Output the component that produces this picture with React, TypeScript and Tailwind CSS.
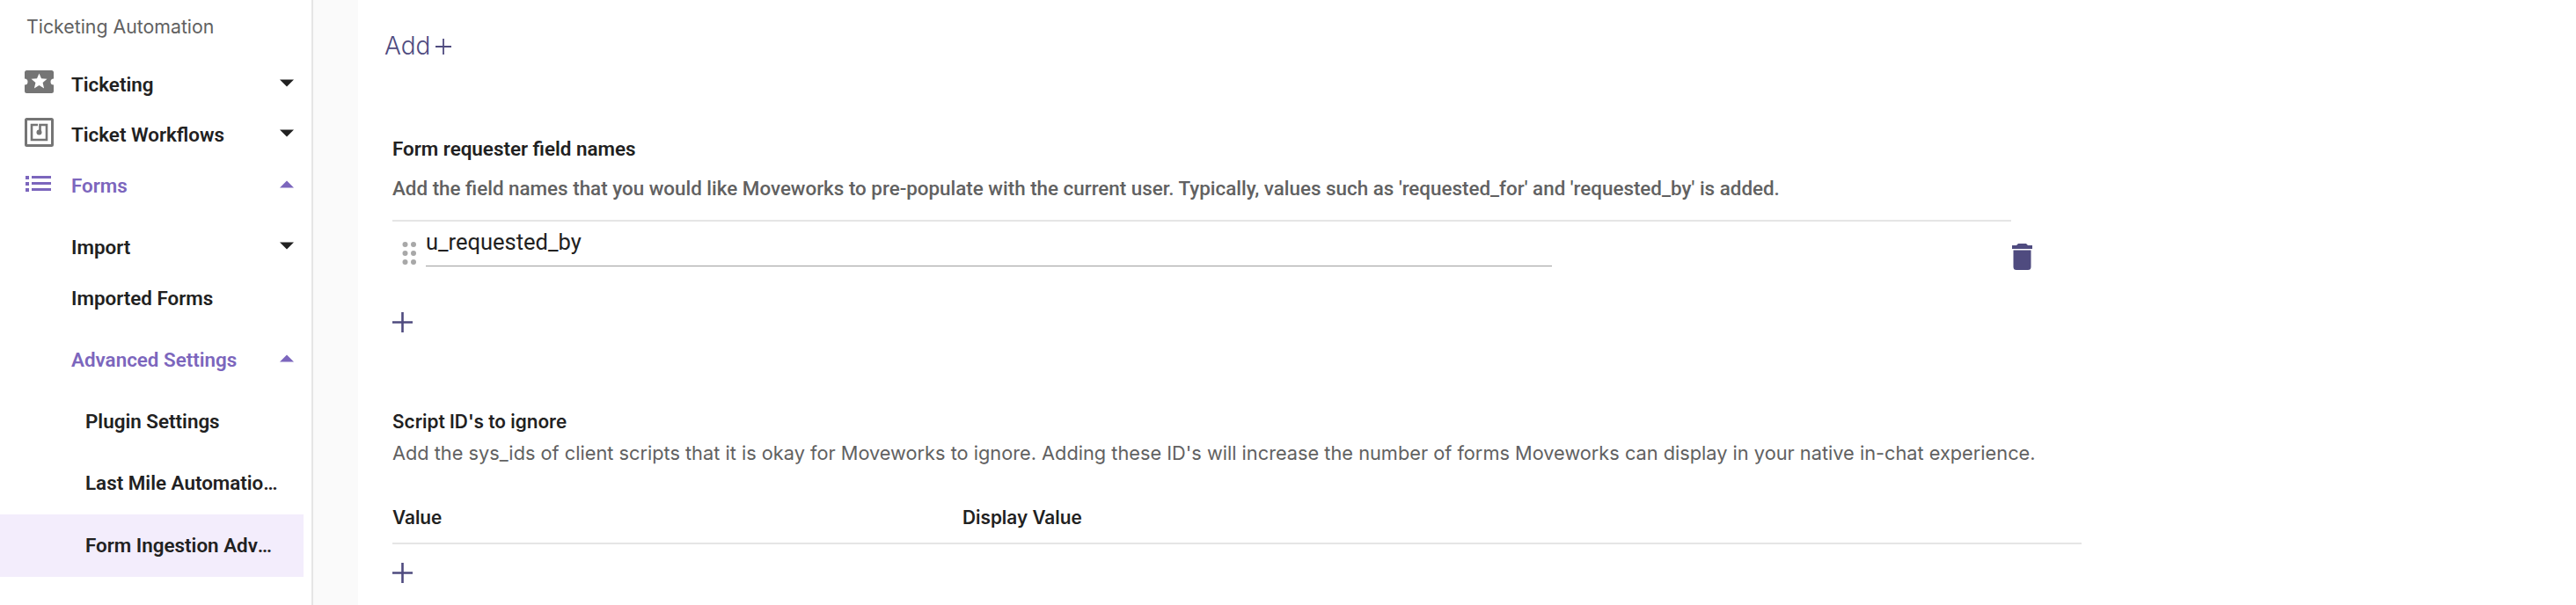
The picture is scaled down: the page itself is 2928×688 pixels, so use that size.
import React from "react";

const Caret = ({ up, color }: { up?: boolean; color: string }) => (
  <svg width="16" height="9" viewBox="0 0 16 9" className="shrink-0">
    <path d={up ? "M0 8.5 L8 0.5 L16 8.5 Z" : "M0 0.5 L8 8.5 L16 0.5 Z"} fill={color} />
  </svg>
);

const TicketIcon = () => (
  <svg width="33" height="26" viewBox="0 0 33 26" className="shrink-0 -mt-[2px]">
    <path
      fillRule="evenodd"
      fill="#757575"
      d="M2.5 0H30.5A2.5 2.5 0 0 1 33 2.5V9.5A3.5 3.5 0 0 0 33 16.5V23.5A2.5 2.5 0 0 1 30.5 26H2.5A2.5 2.5 0 0 1 0 23.5V16.5A3.5 3.5 0 0 0 0 9.5V2.5A2.5 2.5 0 0 1 2.5 0ZM16.5 3.5L19 9.3L25.5 9.8L20.6 14L22.1 20.4L16.5 17L10.9 20.4L12.4 14L7.5 9.8L14 9.3Z"
    />
  </svg>
);

const WorkflowIcon = () => (
  <svg width="33" height="33" viewBox="0 0 33 33" className="shrink-0 -mt-[2px]">
    <path
      fillRule="evenodd"
      fill="#757575"
      d="M2.5 0H30.5A2.5 2.5 0 0 1 33 2.5V30.5A2.5 2.5 0 0 1 30.5 33H2.5A2.5 2.5 0 0 1 0 30.5V2.5A2.5 2.5 0 0 1 2.5 0ZM3 3V30H30V3Z"
    />
    <path fill="none" stroke="#757575" strokeWidth="2.6" d="M15 8H8V25H25V8H17.5V15" />
    <circle cx="16.5" cy="16.5" r="3" fill="#757575" />
  </svg>
);

const ListIcon = () => (
  <svg width="31" height="18" viewBox="0 0 31 18" className="shrink-0">
    <g fill="#7c66bd">
      <rect x="1" y="0" width="4" height="4" />
      <rect x="1" y="7" width="4" height="4" />
      <rect x="1" y="14" width="4" height="4" />
      <rect x="8" y="0" width="22" height="3" />
      <rect x="8" y="7" width="22" height="3" />
      <rect x="8" y="14" width="22" height="3" />
    </g>
  </svg>
);

const PlusIcon = () => (
  <svg width="23" height="23" viewBox="0 0 23 23" className="block">
    <path d="M0 11.5H23M11.5 0V23" stroke="#4f4b7f" strokeWidth="2.6" />
  </svg>
);

const TrashIcon = () => (
  <svg width="23" height="30" viewBox="0 0 23 30" className="block">
    <path
      fill="#4f4b7f"
      d="M7 0H16L18 2H23V6H0V2H5ZM1.5 7.5H21.5V26.5A3.5 3.5 0 0 1 18 30H5A3.5 3.5 0 0 1 1.5 26.5Z"
    />
  </svg>
);

const DragDots = () => (
  <svg width="17" height="26" viewBox="0 0 17 26" className="block">
    <g fill="#a8a8a8">
      {[3, 13, 23].map((y) => (
        <React.Fragment key={y}>
          <circle cx="3.5" cy={y} r="3" />
          <circle cx="13" cy={y} r="3" />
        </React.Fragment>
      ))}
    </g>
  </svg>
);

const NavRow = ({
  h,
  pl,
  icon,
  label,
  caret,
  active,
  selected,
  truncPr,
}: {
  h: string;
  pl: string;
  icon?: React.ReactNode;
  label: string;
  caret?: "up" | "down";
  active?: boolean;
  selected?: boolean;
  truncPr?: boolean;
}) => (
  <div
    className={`flex items-center ${h} ${pl} ${truncPr ? "pr-[27px]" : "pr-[11px]"} ${
      selected ? "bg-[#f3edfc]" : ""
    }`}
  >
    {icon && <div className="w-[53px] flex items-center shrink-0 -mt-[4px]">{icon}</div>}
    <span
      className={`flex-1 truncate pt-[1px] font-['Roboto',sans-serif] text-[22.4px] font-semibold ${
        active ? "text-[#7c66bd]" : "text-[#212121]"
      }`}
    >
      {label}
    </span>
    {caret && (
      <div className="ml-2 -mt-[4px] w-[16px] flex">
        <Caret up={caret === "up"} color={active ? "#7c66bd" : "#212121"} />
      </div>
    )}
  </div>
);

export default function App() {
  return (
    <div className="flex h-[688px] w-[2928px] overflow-hidden bg-white font-['Inter',sans-serif]">
      <aside className="w-[356px] shrink-0 border-r-2 border-[#e5e5e5] pr-[9px]">
        <div className="h-[60px] pt-[1px] flex items-center pl-[30px] text-[21.3px] text-[#616161]">
          Ticketing Automation
        </div>
        <NavRow h="h-[72px]" pl="pl-[28px]" icon={<TicketIcon />} label="Ticketing" caret="down" />
        <NavRow h="h-[43px]" pl="pl-[28px]" icon={<WorkflowIcon />} label="Ticket Workflows" caret="down" />
        <NavRow h="h-[72px]" pl="pl-[28px]" icon={<ListIcon />} label="Forms" caret="up" active />
        <NavRow h="h-[69px]" pl="pl-[81px]" label="Import" caret="down" />
        <NavRow h="h-[47px]" pl="pl-[81px]" label="Imported Forms" />
        <NavRow h="h-[80px] pt-[13px]" pl="pl-[81px]" label="Advanced Settings" caret="up" active />
        <NavRow h="h-[71px] pt-[2px]" pl="pl-[97px]" label="Plugin Settings" />
        <NavRow h="h-[71px]" pl="pl-[97px]" label="Last Mile Automation Settings" truncPr />
        <NavRow h="h-[71px]" pl="pl-[97px]" label="Form Ingestion Advanced Settings" selected truncPr />
      </aside>

      <div className="w-[51px] shrink-0 bg-[#fafafa]" />

      <main className="flex-1 pl-[30px]">
        <div className="h-[104px] flex items-center text-[#4f4b7f] text-[28px] font-light">
          <span>Add</span>
          <svg width="18" height="18" viewBox="0 0 18 18" className="ml-[6px] mt-[2px]">
            <path d="M0 9H18M9 0V18" stroke="#4f4b7f" strokeWidth="1.8" />
          </svg>
        </div>

        <section className="pl-[9px]">
          <div className="h-[34px] mt-[48px] pt-[1px] flex items-center font-['Roboto',sans-serif] text-[22.4px] font-semibold text-[#212121]">
            Form requester field names
          </div>
          <div className="h-[56px] pt-[1px] flex items-center font-['Roboto',sans-serif] text-[22.4px] font-medium text-[#616161]">
            Add the field names that you would like Moveworks to pre-populate with the current user. Typically, values such as 'requested_for' and 'requested_by' is added.
          </div>
          <div className="mt-[8px] w-[1840px] h-[105px] border-t-2 border-[#e5e5e5] flex items-start">
            <div className="ml-[11px] mt-[23px] w-[27px] shrink-0">
              <DragDots />
            </div>
            <div className="w-[1280px] shrink-0 h-[52px] border-b-[1.5px] border-[#9e9e9e] text-[25.5px] leading-[48px] font-['Roboto',sans-serif] text-[#212121] -mt-[1px]">
              u_requested_by
            </div>
            <div className="ml-[523px] mt-[25px] shrink-0">
              <TrashIcon />
            </div>
          </div>
          <PlusIcon />
        </section>

        <section className="pl-[9px] mt-[86px]">
          <div className="h-[30px] pt-[1px] flex items-center text-[20.8px] font-semibold text-[#212121]">
            Script ID's to ignore
          </div>
          <div className="h-[42px] flex items-center text-[21.76px] text-[#616161]">
            Add the sys_ids of client scripts that it is okay for Moveworks to ignore. Adding these ID's will increase the number of forms Moveworks can display in your native in-chat experience.
          </div>
          <div className="mt-[41px] w-[1920px] h-[42px] pb-[16px] border-b-2 border-[#e5e5e5] flex items-center text-[20.8px] font-semibold text-[#212121]">
            <div className="w-[648px]">Value</div>
            <div>Display Value</div>
          </div>
          <div className="mt-[21px]">
            <PlusIcon />
          </div>
        </section>
      </main>
    </div>
  );
}
